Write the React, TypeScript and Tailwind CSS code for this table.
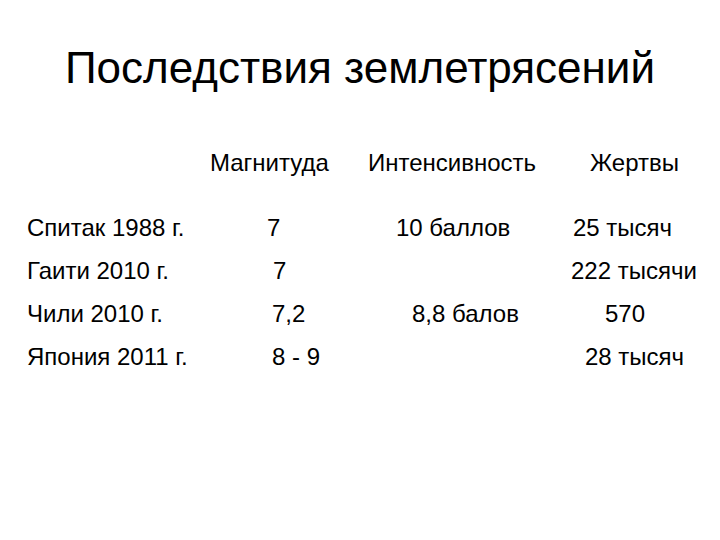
export default function App() {
  const font = { fontFamily: '"Liberation Sans", Arial, sans-serif' };
  return (
    <div className="w-[720px] h-[540px] bg-white text-black overflow-hidden" style={font}>
      <h1 className="pt-[43px] text-center text-[44px] leading-[50px] font-normal">Последствия землетрясений</h1>
      <div className="mt-[48px] pl-[27px] text-[24px] leading-[43px]">
        <div className="grid grid-cols-[173px_160px_200px_1fr]">
          <div></div>
          <div className="pl-[10px]">Магнитуда</div>
          <div className="pl-[8px]">Интенсивность</div>
          <div className="pl-[30px]">Жертвы</div>
        </div>
        <div className="grid grid-cols-[173px_160px_200px_1fr] mt-[22px]">
          <div>Спитак 1988 г.</div>
          <div className="pl-[67px]">7</div>
          <div className="pl-[36px]">10 баллов</div>
          <div className="pl-[13px]">25 тысяч</div>
        </div>
        <div className="grid grid-cols-[173px_160px_200px_1fr]">
          <div>Гаити 2010 г.</div>
          <div className="pl-[73px]">7</div>
          <div></div>
          <div className="pl-[11px]">222 тысячи</div>
        </div>
        <div className="grid grid-cols-[173px_160px_200px_1fr]">
          <div>Чили 2010 г.</div>
          <div className="pl-[72px]">7,2</div>
          <div className="pl-[52px]">8,8 балов</div>
          <div className="pl-[45px]">570</div>
        </div>
        <div className="grid grid-cols-[173px_160px_200px_1fr]">
          <div>Япония 2011 г.</div>
          <div className="pl-[72px]">8 - 9</div>
          <div></div>
          <div className="pl-[25px]">28 тысяч</div>
        </div>
      </div>
    </div>
  );
}
